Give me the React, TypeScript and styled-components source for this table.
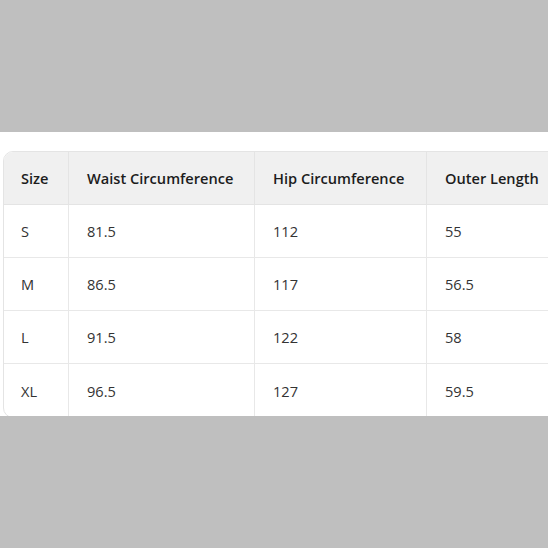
import React from "react";
import styled, { createGlobalStyle } from "styled-components";

const Global = createGlobalStyle`
  html, body { margin: 0; padding: 0; background: #bfbfbf; }
  body { font-family: "Open Sans", "Noto Sans", sans-serif; }
`;

const Band = styled.section`
  margin-top: 132px;
  height: 284px;
  background: #ffffff;
  padding: 19px 0 0 3px;
  box-sizing: border-box;
  overflow: hidden;
`;

const Table = styled.table`
  border-collapse: separate;
  border-spacing: 0;
  border: 1px solid #e4e4e4;
  border-radius: 10px;
  overflow: hidden;
  table-layout: fixed;
  width: 600px;
`;

const Th = styled.th<{ $w: number }>`
  width: ${(p) => p.$w}px;
  height: 53px;
  background: #f0f0f0;
  color: #1c1c1c;
  font-size: 14.6px;
  font-weight: 600;
  text-align: left;
  padding: 0 0 0 18px;
  box-sizing: border-box;
  border-bottom: 1px solid #e4e4e4;
  border-left: 1px solid #e4e4e4;
  white-space: nowrap;
  &:first-child { border-left: none; padding-left: 17px; }
`;

const Td = styled.td<{ $last?: boolean }>`
  height: 53px;
  color: #333333;
  font-size: 14.6px;
  font-weight: 400;
  padding: 0 0 0 18px;
  box-sizing: border-box;
  border-left: 1px solid #e8e8e8;
  border-bottom: ${(p) => (p.$last ? "none" : "1px solid #e8e8e8")};
  white-space: nowrap;
  &:first-child { border-left: none; padding-left: 17px; }
`;

const cols = [
  { label: "Size", w: 64 },
  { label: "Waist Circumference", w: 186 },
  { label: "Hip Circumference", w: 172 },
  { label: "Outer Length", w: 178 },
];

const rows = [
  ["S", "81.5", "112", "55"],
  ["M", "86.5", "117", "56.5"],
  ["L", "91.5", "122", "58"],
  ["XL", "96.5", "127", "59.5"],
];

export default function App() {
  return (
    <>
      <Global />
      <Band>
        <Table>
          <thead>
            <tr>
              {cols.map((c) => (
                <Th key={c.label} $w={c.w}>
                  {c.label}
                </Th>
              ))}
            </tr>
          </thead>
          <tbody>
            {rows.map((r, i) => (
              <tr key={r[0]}>
                {r.map((v, j) => (
                  <Td key={j} $last={i === rows.length - 1}>
                    {v}
                  </Td>
                ))}
              </tr>
            ))}
          </tbody>
        </Table>
      </Band>
    </>
  );
}
